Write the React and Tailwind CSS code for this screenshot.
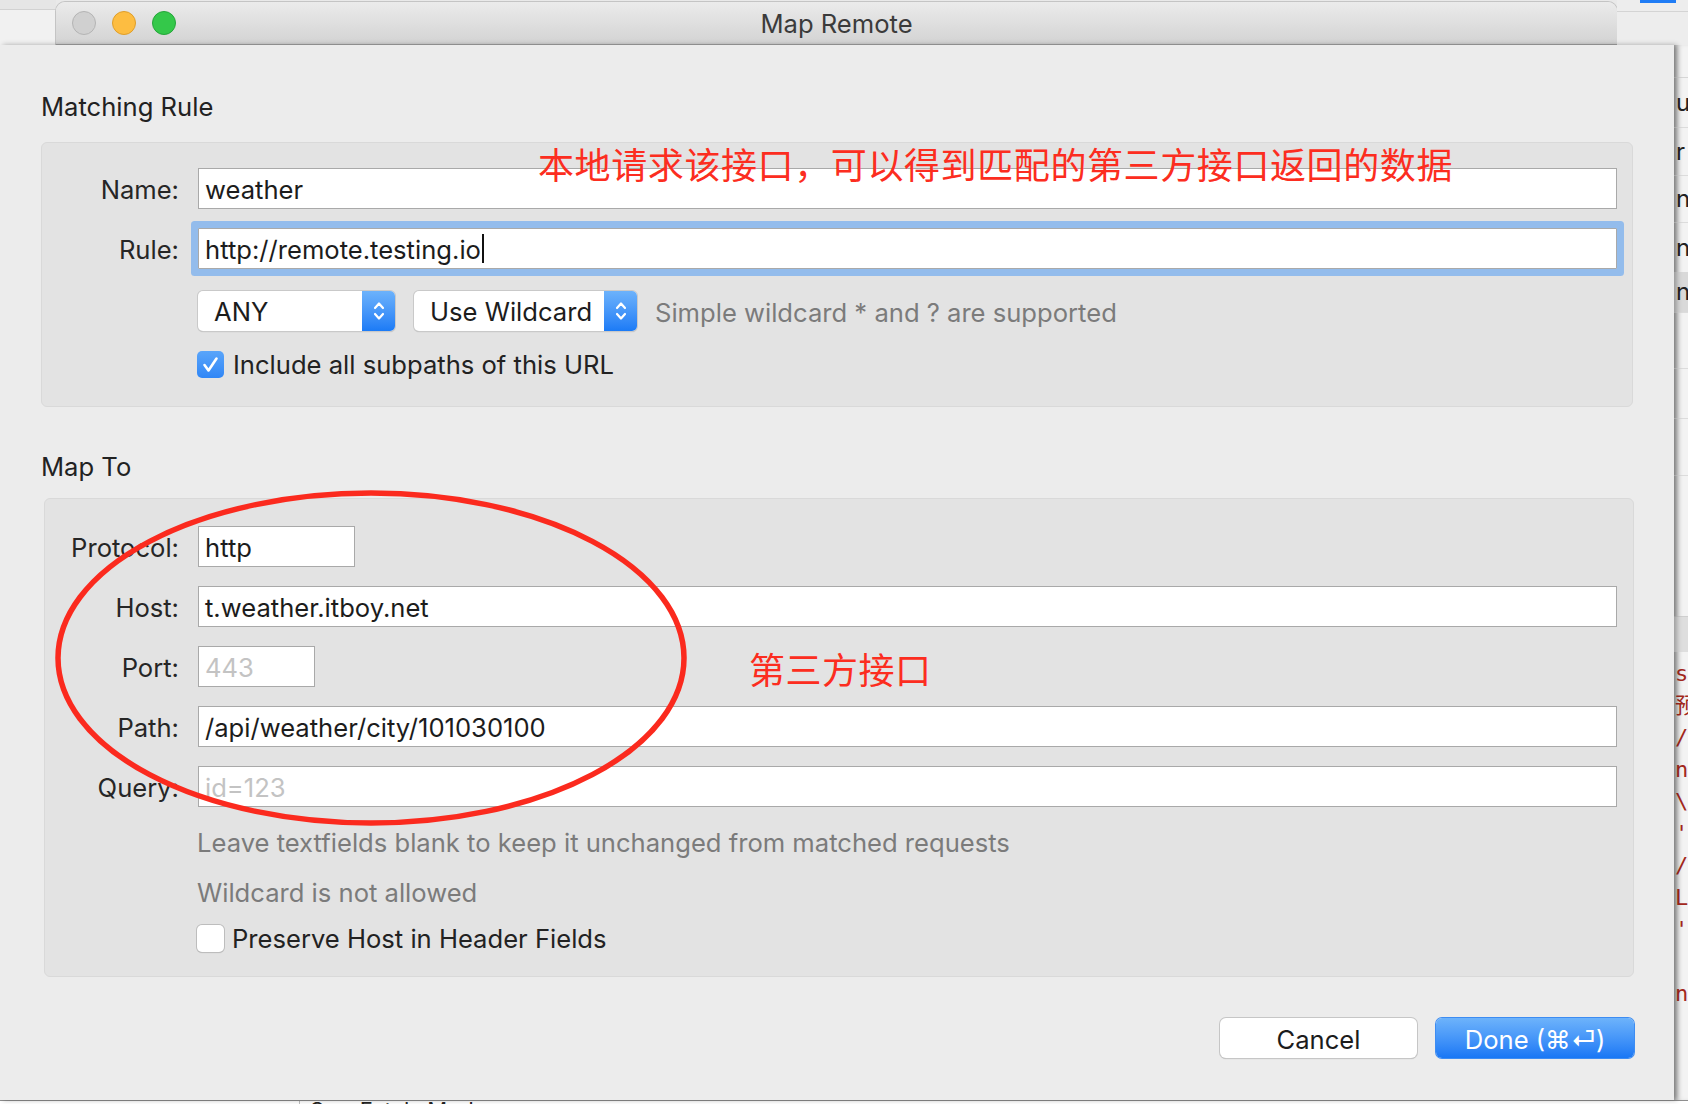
import React from 'react';

// Stepper chevrons inside the blue part of a popup button
function Stepper() {
  return (
    <svg width="14" height="24" viewBox="0 0 14 24" fill="none" stroke="white" strokeWidth="2.2" strokeLinecap="round" strokeLinejoin="round">
      <path d="M3 9 L7 4.5 L11 9" />
      <path d="M3 15 L7 19.5 L11 15" />
    </svg>
  );
}

function Popup({ label, width, textPad }) {
  return (
    <div className={`flex h-[40px] shrink-0 overflow-hidden rounded-[5px] bg-white shadow-[0_0_0_1px_#c9c9c9,0_1px_1px_rgba(0,0,0,0.25)] ${width}`}>
      <div className={`flex flex-1 items-center pt-[3px] text-[25.6px] text-[#1c1c1c] ${textPad}`}>{label}</div>
      <div className="flex w-[33px] items-center justify-center bg-gradient-to-b from-[#6cb2fb] to-[#1b7bf6]">
        <Stepper />
      </div>
    </div>
  );
}

function Checkbox({ checked }) {
  if (checked) {
    return (
      <div className="flex h-[27px] w-[27px] shrink-0 items-center justify-center rounded-[5px] bg-gradient-to-b from-[#5aa5fa] to-[#2f86f6]">
        <svg width="27" height="27" viewBox="0 0 27 27" fill="none" stroke="white" strokeWidth="2.6" strokeLinecap="round" strokeLinejoin="round">
          <path d="M7.5 14 L11.5 19.5 L19.5 7.5" />
        </svg>
      </div>
    );
  }
  return <div className="h-[27px] w-[27px] shrink-0 rounded-[5px] bg-white shadow-[0_0_0_1px_#bdbdbd,0_1px_1px_rgba(0,0,0,0.2)]" />;
}

function Field({ value, placeholder, width, focus, caret }) {
  return (
    <div
      className={`flex h-[41px] items-center border border-[#a9a9a9] bg-white pl-[6px] pt-[4px] text-[25.6px] ${width} ${
        focus ? 'h-[40px] border-[#9fb7d6] shadow-[0_0_0_7px_#93bcec] rounded-[1px]' : ''
      }`}
    >
      {value ? (
        <span className="text-[#1c1c1c]">{value}</span>
      ) : (
        <span className="text-[#c3c3c3]">{placeholder}</span>
      )}
      {caret && <span className="-mt-[4px] ml-[1px] inline-block h-[29px] w-[2px] bg-[#111]" />}
    </div>
  );
}

function Row({ label, labelW, right, className, children }) {
  return (
    <div className={`flex items-center ${className}`}>
      <div className={`shrink-0 pt-[4px] text-right text-[25.6px] text-[#262626] ${labelW}`}>{label}</div>
      <div className={`ml-[19px] flex flex-1 items-center ${right}`}>{children}</div>
    </div>
  );
}

function TitleBar() {
  return (
    <div className="mt-[2px] grid h-[43px] w-[1561px] shrink-0 grid-cols-[1fr_auto_1fr] items-center rounded-t-[9px] border-b border-[#a3a3a3] bg-gradient-to-b from-[#ebebeb] to-[#d3d3d3] shadow-[0_0_0_1px_#c4c4c4]">
      <div className="flex items-center gap-[16px] pl-[16px]">
        <span className="h-[24px] w-[24px] rounded-full border border-[#b4b4b4] bg-[#d0d0d0]" />
        <span className="h-[24px] w-[24px] rounded-full border border-[#df9e2a] bg-[#fdbd41]" />
        <span className="h-[24px] w-[24px] rounded-full border border-[#25a53a] bg-[#34c84a]" />
      </div>
      <div className="pt-[3px] text-[25.6px] text-[#3b3b3b]">Map Remote</div>
      <div />
    </div>
  );
}

function RightStrip() {
  const rows = [
    ['h-[32px]', '', ''],
    ['h-[50px] border-t border-[#d6d6d6]', 'us', ''],
    ['h-[48px] border-t border-[#dcdcdc]', 'r', ''],
    ['h-[47px] border-t border-[#dcdcdc]', 'np', ''],
    ['h-[50px] border-t border-[#dcdcdc]', 'np', ''],
    ['h-[40px] bg-[#d9d9d9]', 'np', ''],
    ['h-[56px] border-t border-[#dcdcdc]', '', ''],
    ['h-[50px] border-t border-[#dcdcdc]', '', ''],
    ['h-[57px] border-t border-[#dcdcdc]', '', ''],
    ['h-[141px] border-t border-[#dcdcdc]', '', ''],
    ['h-[36px] border-t border-[#cfcfcf] bg-[#dedede]', '', ''],
  ];
  const code = ['ss', '预', '//', 'n', '\\"', "'h", '/i', 'La', "'r", '', 'n.'];
  return (
    <div className="flex flex-1 flex-col overflow-hidden bg-[#f3f3f3] text-[24px] text-[#222] shadow-[inset_6px_0_6px_-4px_rgba(0,0,0,0.35)]">
      {rows.map((r, i) => (
        <div key={i} className={`flex shrink-0 items-center overflow-hidden whitespace-nowrap pl-[2px] ${r[0]}`}>
          {r[1]}
        </div>
      ))}
      <div className="flex flex-col pl-[1px] pt-[6px] font-['DejaVu_Sans_Mono','Noto_Sans_CJK_SC',monospace] text-[22px] leading-[32px] text-[#a3281c]">
        {code.map((c, i) => (
          <div key={i} className="h-[32px] whitespace-nowrap">{c}</div>
        ))}
      </div>
    </div>
  );
}

export default function App() {
  return (
    <div className="relative flex h-[1104px] w-[1688px] flex-col overflow-hidden bg-[#e9e9e9] font-[Inter,'Noto_Sans_CJK_SC',sans-serif]">
      {/* window strip behind the sheet */}
      <div className="flex h-[45px] shrink-0">
        <div className="flex w-[56px] shrink-0 flex-col bg-[#f1f1f1]">
          <div className="h-[10px] border-b border-[#d2d2d2] bg-[#e6e6e6]" />
        </div>
        <TitleBar />
        <div className="flex flex-1 flex-col bg-[#ededed]">
          <div className="ml-[23px] h-[3px] w-[36px] bg-[#1f7cf5]" />
          <div className="mt-[8px] border-b border-[#d4d4d4]" />
        </div>
      </div>

      <div className="flex h-[1055px] shrink-0">
        {/* sheet body */}
        <div className="relative z-10 flex w-[1674px] shrink-0 flex-col bg-[#ececec] pl-[41px] pt-[44px] shadow-[3px_0_5px_rgba(0,0,0,0.3)]">
          <div className="h-[32px] pt-[2px] text-[25.6px] leading-[32px] text-[#222]">Matching Rule</div>

          <div className="mt-[21px] flex h-[265px] w-[1592px] flex-col rounded-[6px] border border-[#d9d9d9] bg-[#e3e3e3] pt-[25px]">
            <Row label="Name:" labelW="w-[137px]" right="mr-[15px]" className="h-[41px]">
              <Field value="weather" width="flex-1" />
            </Row>
            <Row label="Rule:" labelW="w-[137px]" right="mr-[15px]" className="mt-[19px] h-[40px]">
              <Field value="http://remote.testing.io" width="flex-1" focus caret />
            </Row>
            <Row label="" labelW="w-[137px]" right="mr-[15px]" className="mt-[23px] h-[40px]">
              <Popup label="ANY" width="w-[197px]" textPad="pl-[16px]" />
              <div className="ml-[19px]">
                <Popup label="Use Wildcard" width="w-[223px]" textPad="pl-[16px]" />
              </div>
              <span className="ml-[18px] pt-[5px] text-[25.6px] text-[#7b7b7b]">Simple wildcard * and ? are supported</span>
            </Row>
            <div className="ml-[155px] mt-[19px] flex h-[28px] items-center">
              <Checkbox checked />
              <span className="ml-[9px] pt-[2px] text-[25.6px] text-[#222]">Include all subpaths of this URL</span>
            </div>
          </div>

          <div className="mt-[44px] h-[32px] text-[25.6px] leading-[32px] text-[#222]">Map To</div>

          <div className="ml-[3px] mt-[15px] flex h-[479px] w-[1590px] flex-col rounded-[6px] border border-[#d9d9d9] bg-[#e3e3e3] pt-[27px]">
            <Row label="Protocol:" labelW="w-[134px]" right="mr-[16px]" className="h-[41px]">
              <Field value="http" width="w-[157px]" />
            </Row>
            <Row label="Host:" labelW="w-[134px]" right="mr-[16px]" className="mt-[19px] h-[41px]">
              <Field value="t.weather.itboy.net" width="flex-1" />
            </Row>
            <Row label="Port:" labelW="w-[134px]" right="mr-[16px]" className="mt-[19px] h-[41px]">
              <Field placeholder="443" width="w-[117px]" />
            </Row>
            <Row label="Path:" labelW="w-[134px]" right="mr-[16px]" className="mt-[19px] h-[41px]">
              <Field value="/api/weather/city/101030100" width="flex-1" />
            </Row>
            <Row label="Query:" labelW="w-[134px]" right="mr-[16px]" className="mt-[19px] h-[41px]">
              <Field placeholder="id=123" width="flex-1" />
            </Row>
            <div className="ml-[152px] mt-[20px] h-[32px] text-[25.6px] leading-[32px] text-[#7b7b7b]">
              Leave textfields blank to keep it unchanged from matched requests
            </div>
            <div className="ml-[152px] mt-[18px] h-[32px] text-[25.6px] leading-[32px] text-[#7b7b7b]">
              Wildcard is not allowed
            </div>
            <div className="ml-[152px] mt-[15px] flex h-[28px] items-center">
              <Checkbox />
              <span className="ml-[8px] pt-[2px] text-[25.6px] text-[#222]">Preserve Host in Header Fields</span>
            </div>
          </div>

          <div className="mr-[40px] mt-[41px] flex justify-end gap-[19px]">
            <button className="h-[40px] w-[197px] rounded-[6px] bg-white pt-[3px] text-[25.6px] text-[#1c1c1c] shadow-[0_0_0_1px_#c6c6c6,0_1px_1px_rgba(0,0,0,0.25)]">
              Cancel
            </button>
            <button className="h-[40px] w-[198px] rounded-[6px] bg-gradient-to-b from-[#6db3fb] to-[#1877f5] pt-[3px] text-[25.6px] text-white shadow-[0_0_0_1px_#3d8cf2]">
              Done (⌘⏎)
            </button>
          </div>
        </div>
        <RightStrip />
      </div>

      {/* window under the sheet, bottom edge */}
      <div className="flex h-[4px] shrink-0 overflow-hidden border-t border-[#8f8f8f] bg-white text-[22px] leading-[22px] text-[#222]">
        <div className="w-[300px] shrink-0 border-r border-[#bdbdbd]" />
        <span className="-mt-[2px] ml-[10px] w-[321px]">Sec-Fetch-Mode</span>
        <span className="-mt-[2px]">cors</span>
      </div>

      {/* annotations drawn over the screenshot */}
      <div className="absolute left-[538px] top-[145px] z-20 font-['Noto_Sans_CJK_SC',sans-serif] text-[36px] leading-[36px] tracking-[0.6px] text-[#fc2d20]">
        本地请求该接口，可以得到匹配的第三方接口返回的数据
      </div>
      <div className="absolute left-[749px] top-[650px] z-20 font-['Noto_Sans_CJK_SC',sans-serif] text-[36px] leading-[36px] tracking-[0.5px] text-[#fc2d20]">
        第三方接口
      </div>
      <svg className="pointer-events-none absolute left-0 top-0 z-20" width="1688" height="1104">
        <ellipse cx="371" cy="658" rx="313" ry="165" fill="none" stroke="#fb2a1e" strokeWidth="5.5" />
      </svg>
    </div>
  );
}
